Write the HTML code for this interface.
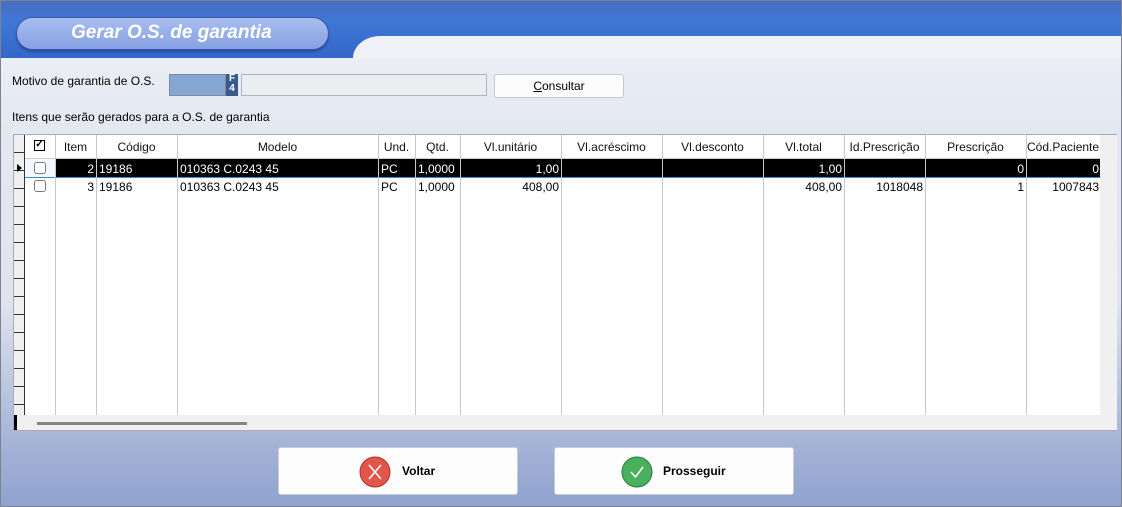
<!DOCTYPE html>
<html><head><style>
*{box-sizing:border-box;margin:0;padding:0}
body{width:1122px;height:507px;overflow:hidden;font-family:"Liberation Sans",sans-serif;font-size:12px;position:relative;background:#7d8290}
.win{position:absolute;left:1px;top:1px;width:1120px;height:505px;background:linear-gradient(#f0f2f7 0px,#e4e8f2 130px,#dfe4ef 300px,#a6b4d6 440px,#8fa2cf 505px);overflow:hidden}
.hdr{position:absolute;left:0;top:0;width:1120px;height:57px;background:linear-gradient(#4a6cc0,#3f78d6 20px,#3466c8 57px)}
.curve{position:absolute;left:352px;top:35px;width:800px;height:22px;background:#eff1f6;border-top-left-radius:30px 24px}
.pill{position:absolute;left:16px;top:17px;width:311px;height:31px;border-radius:16px;background:linear-gradient(#a8bdf0,#86a2e2);box-shadow:0 0 0 1px #3a5aa8,0 2px 3px #1d3a80}
.pill span{position:absolute;left:54px;top:4px;color:#fff;font-size:19px;font-weight:bold;font-style:italic}
.abs{position:absolute}
.grid{position:absolute;left:12px;top:133px;width:1104px;height:297px;background:#fff;border:1px solid #aab;}
.col{position:absolute;top:0;height:280px;border-left:1px solid #c8c8c8}
.h{position:absolute;top:5px;text-align:center;font-size:12px;color:#111}
.c{position:absolute;font-size:12px;white-space:nowrap}
.btn{position:absolute;top:446px;width:240px;height:48px;background:#fdfdfd;border:1px solid #c9cdd8;border-radius:3px}
.btn b{position:absolute;left:123px;top:16px;font-size:12px}
</style></head><body><div class="win">
<div class="hdr"></div><div class="curve"></div>
<div class="pill"><span>Gerar O.S. de garantia</span></div>
<div class="abs" style="left:11px;top:73px">Motivo de garantia de O.S.</div>
<div class="abs" style="left:168px;top:73px;width:57px;height:22px;background:#86a6d4;border:1px solid #7a8aa0"></div>
<div class="abs" style="left:225px;top:73px;width:12px;height:22px;background:#3a5a8a;color:#fff;font-size:10px;font-weight:bold;line-height:10px;text-align:center">F<br>4</div>
<div class="abs" style="left:240px;top:73px;width:246px;height:22px;background:#ebedf0;border:1px solid #aab4c4"></div>
<div class="abs" style="left:493px;top:73px;width:130px;height:24px;background:#fcfcfd;border:1px solid #c4c8d0;border-radius:3px;text-align:center;line-height:22px"><u>C</u>onsultar</div>
<div class="abs" style="left:11px;top:109px">Itens que serão gerados para a O.S. de garantia</div>
<div class="grid">
<div class="abs" style="left:0;top:0;width:11px;height:280px;background:#f0f0f0;border-right:1px solid #333;background-image:repeating-linear-gradient(#f0f0f0 0 17px,#333 17px 18px)"></div>
<div class="abs" style="left:41px;top:24px;width:1045px;height:18px;background:#000"></div>
<div class="abs" style="left:11px;top:42px;width:1075px;border-top:1px solid #3a8ad0"></div>
<div class="abs" style="left:11px;top:24px;width:30px;height:18px;background:#f4f8fc"></div>
<div class="abs" style="left:3px;top:29px;border-left:5px solid #000;border-top:4px solid transparent;border-bottom:4px solid transparent"></div>
<div class="col" style="left:41px"></div><div class="col" style="left:82px"></div><div class="col" style="left:163px"></div><div class="col" style="left:364px"></div><div class="col" style="left:401px"></div><div class="col" style="left:446px"></div><div class="col" style="left:547px"></div><div class="col" style="left:648px"></div><div class="col" style="left:749px"></div><div class="col" style="left:830px"></div><div class="col" style="left:911px"></div><div class="col" style="left:1012px"></div>
<div class="abs" style="left:11px;top:23px;width:1075px;border-top:1px solid #ccc"></div>
<div class="abs" style="left:20px;top:5px;width:11px;height:11px;border:1.5px solid #000;font-size:10px;line-height:8px;text-align:center;font-weight:bold">✓</div>
<div class="h" style="left:41px;width:41px">Item</div><div class="h" style="left:82px;width:81px">Código</div><div class="h" style="left:163px;width:201px">Modelo</div><div class="h" style="left:364px;width:37px">Und.</div><div class="h" style="left:401px;width:45px">Qtd.</div><div class="h" style="left:446px;width:101px">Vl.unitário</div><div class="h" style="left:547px;width:101px">Vl.acréscimo</div><div class="h" style="left:648px;width:101px">Vl.desconto</div><div class="h" style="left:749px;width:81px">Vl.total</div><div class="h" style="left:830px;width:81px">Id.Prescrição</div><div class="h" style="left:911px;width:101px">Prescrição</div><div class="h" style="left:1012px;width:74px;overflow:hidden;text-align:left;padding-left:1px">Cód.Paciente</div>
<div class="abs" style="left:20px;top:27px;width:12px;height:12px;border:1px solid #777;border-radius:3px;background:#fff"></div>
<div class="abs" style="left:20px;top:45px;width:12px;height:12px;border:1px solid #777;border-radius:3px;background:#fff"></div>
<div style="color:#fff">
<div class="c" style="left:41px;width:39px;top:27px;text-align:right">2</div><div class="c" style="left:85px;top:27px">19186</div><div class="c" style="left:166px;top:27px">010363 C.0243 45</div><div class="c" style="left:367px;top:27px">PC</div><div class="c" style="left:404px;top:27px">1,0000</div><div class="c" style="left:446px;width:99px;top:27px;text-align:right">1,00</div><div class="c" style="left:749px;width:79px;top:27px;text-align:right">1,00</div><div class="c" style="left:911px;width:99px;top:27px;text-align:right">0</div><div class="c" style="left:1012px;width:73px;top:27px;text-align:right">0</div></div>
<div class="c" style="left:41px;width:39px;top:45px;text-align:right">3</div><div class="c" style="left:85px;top:45px">19186</div><div class="c" style="left:166px;top:45px">010363 C.0243 45</div><div class="c" style="left:367px;top:45px">PC</div><div class="c" style="left:404px;top:45px">1,0000</div><div class="c" style="left:446px;width:99px;top:45px;text-align:right">408,00</div><div class="c" style="left:749px;width:79px;top:45px;text-align:right">408,00</div><div class="c" style="left:830px;width:79px;top:45px;text-align:right">1018048</div><div class="c" style="left:911px;width:99px;top:45px;text-align:right">1</div><div class="c" style="left:1012px;width:73px;top:45px;text-align:right">1007843</div>
<div class="abs" style="left:1086px;top:0;width:17px;height:295px;background:#f0f0f0"></div>
<div class="abs" style="left:0;top:280px;width:1086px;height:15px;background:#f0f0f0;border-left:3px solid #000"></div>
<div class="abs" style="left:23px;top:287px;width:210px;height:3px;background:#858585"></div>
</div>
<div class="btn" style="left:277px"><svg class="abs" style="left:80px;top:8px" width="32" height="32"><circle cx="16" cy="16" r="15" fill="#e0574a" stroke="#a33" stroke-width="1"/><path d="M10 9L22 23M22 9L10 23" stroke="#fff" stroke-width="1.5"/></svg><b style="left:123px">Voltar</b></div>
<div class="btn" style="left:553px"><svg class="abs" style="left:66px;top:8px" width="32" height="32"><circle cx="16" cy="16" r="15" fill="#4caf5e" stroke="#2b7a3a" stroke-width="1"/><path d="M10 16L14.5 21L22 11" stroke="#fff" stroke-width="1.5" fill="none"/></svg><b style="left:108px">Prosseguir</b></div>
</div></body></html>
